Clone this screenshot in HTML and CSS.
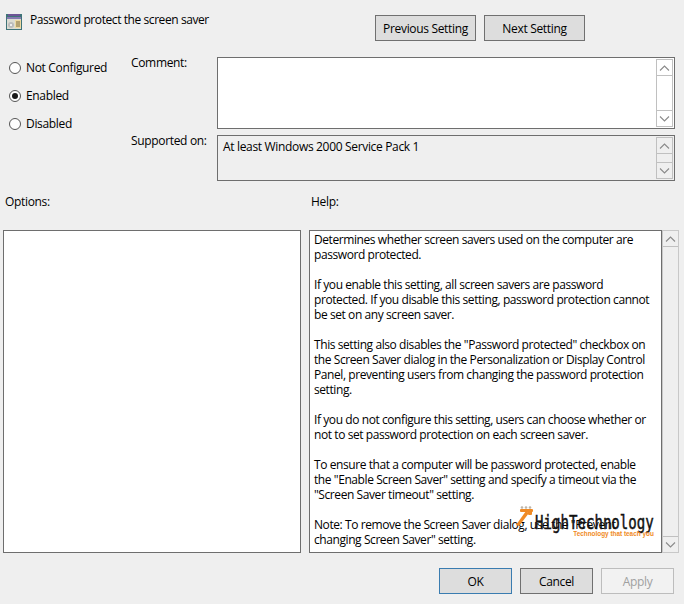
FILE: index.html
```html
<!DOCTYPE html>
<html lang="en">
<head>
<meta charset="utf-8">
<title>Password protect the screen saver</title>
<link rel="stylesheet" href="styles.css">
</head>
<body>
<div class="dialog">
  <header class="head">
    <div class="title">
      <svg class="title-icon" width="16" height="16" viewBox="0 0 16 16">
        <rect x="0" y="0" width="16" height="16" fill="#3f7378"/>
        <rect x="2" y="0" width="12" height="2" fill="#6d5596"/>
        <rect x="1" y="3" width="14" height="2" fill="#8578b0"/>
        <rect x="1" y="5" width="14" height="10" fill="#dcdcd2"/>
        <circle cx="5" cy="11" r="3" fill="#bcbcbc"/>
        <circle cx="5" cy="11" r="1" fill="#fff"/>
        <rect x="9" y="6" width="6" height="8" fill="#eed9a0"/>
        <path d="M10 8h4M10 10h4M10 12h4" stroke="#7a6a44" stroke-width="1"/>
      </svg>
      <span>Password protect the screen saver</span>
    </div>
    <div class="nav">
      <button class="btn nav-btn" type="button">Previous Setting</button>
      <button class="btn nav-btn" type="button">Next Setting</button>
    </div>
  </header>

  <section class="settings">
    <div class="radios">
      <label class="radio"><span class="dot"></span>Not Configured</label>
      <label class="radio"><span class="dot on"></span>Enabled</label>
      <label class="radio"><span class="dot"></span>Disabled</label>
    </div>
    <div class="fields">
      <div class="field field-comment">
        <span class="field-label">Comment:</span>
        <div class="box box-white box-wide">
          <div class="box-text"></div>
          <div class="scroll">
            <span class="arrow"><svg width="11" height="6" viewBox="0 0 11 6"><path d="M1 5.5 5.5 1 10 5.500" class="chev"/></svg></span>
            <span class="track"></span>
            <span class="arrow arrow-end"><svg width="11" height="6" viewBox="0 0 11 6"><path d="M1 .5 5.500 5 10 .5" class="chev"/></svg></span>
          </div>
        </div>
      </div>
      <div class="field field-support">
        <span class="field-label">Supported on:</span>
        <div class="box box-wide box-support">
          <div class="box-text">At least Windows 2000 Service Pack 1</div>
          <div class="scroll">
            <span class="arrow"><svg width="11" height="6" viewBox="0 0 11 6"><path d="M1 5.5 5.5 1 10 5.500" class="chev"/></svg></span>
            <span class="track"></span>
            <span class="arrow arrow-end"><svg width="11" height="6" viewBox="0 0 11 6"><path d="M1 .5 5.500 5 10 .5" class="chev"/></svg></span>
          </div>
        </div>
      </div>
    </div>
  </section>

  <section class="panes">
    <div class="pane pane-options">
      <div class="pane-label">Options:</div>
      <div class="box box-white box-tall"></div>
    </div>
    <div class="pane pane-help">
      <div class="pane-label">Help:</div>
      <div class="help-wrap">
        <div class="box box-white box-tall help-text">
          <p>Determines whether screen savers used on the computer are password protected.</p>
          <p>If you enable this setting, all screen savers are password protected. If you disable this setting, password protection cannot be set on any screen saver.</p>
          <p>This setting also disables the "Password protected" checkbox on the Screen Saver dialog in the Personalization or Display Control Panel, preventing users from changing the password protection setting.</p>
          <p>If you do not configure this setting, users can choose whether or not to set password protection on each screen saver.</p>
          <p>To ensure that a computer will be password protected, enable the "Enable Screen Saver" setting and specify a timeout via the "Screen Saver timeout" setting.</p>
          <p>Note: To remove the Screen Saver dialog, use the "Prevent changing Screen Saver" setting.</p>
        </div>
        <div class="scroll scroll-help">
          <span class="arrow"><svg width="11" height="6" viewBox="0 0 11 6"><path d="M1 5.5 5.5 1 10 5.500" class="chev"/></svg></span>
          <span class="track"></span>
          <span class="arrow arrow-end"><svg width="11" height="6" viewBox="0 0 11 6"><path d="M1 .5 5.500 5 10 .5" class="chev"/></svg></span>
        </div>
        <div class="watermark">
          <svg class="wm-logo" width="18" height="21" viewBox="0 0 18 21">
            <g fill="#bdb5aa"><circle cx="6" cy="1.500" r="1.300"/><circle cx="10" cy="1.500" r="1.300"/><circle cx="14" cy="1.500" r="1.300"/></g>
            <g fill="#f08a24"><rect x="4" y="3" width="13" height="3" rx="1"/><rect x="12" y="5" width="4" height="4" rx="1"/><path d="M10 5l3 2-10 13-3-1z"/></g>
          </svg>
          <div class="wm-copy">
            <div class="wm-name">HighTechnology</div>
            <div class="wm-tag">Technology that teach you</div>
          </div>
        </div>
      </div>
    </div>
  </section>

  <footer class="actions">
    <button class="btn btn-default" type="button">OK</button>
    <button class="btn" type="button">Cancel</button>
    <button class="btn btn-disabled" type="button" disabled>Apply</button>
  </footer>
</div>
</body>
</html>
```
FILE: styles.css
```css
* { box-sizing: border-box; }
html, body { margin: 0; padding: 0; }
body {
  width: 684px;
  height: 604px;
  overflow: hidden;
  background: #efefef;
  color: #000;
  font-family: "Open Sans", "Noto Sans", sans-serif;
  font-size: 12px;
  line-height: 15px;
  letter-spacing: -0.33px;
}
.dialog { display: flex; flex-direction: column; height: 604px; }

.head { display: flex; flex: none; justify-content: space-between; height: 57px; padding: 14px 99px 0 6px; }
.title { display: flex; align-items: flex-start; gap: 8px; letter-spacing: -0.42px; }
.title span { margin-top: -2px; }
.nav { display: flex; gap: 8px; padding-top: 1px; }

.btn {
  width: 73px;
  height: 26px;
  padding: 0;
  border: 1px solid #707070;
  border-radius: 0;
  background: #dddddd;
  color: #000;
  font: inherit;
  letter-spacing: inherit;
}
.nav-btn { width: 101px; }
.btn-default { border-color: #3a7cb0; }
.btn-disabled { background: #f2f2f2; border-color: #bdbdbd; color: #a0a0a0; }

.settings { display: flex; flex: none; height: 124px; }
.radios { width: 131px; padding: 3px 0 0 9px; display: flex; flex-direction: column; gap: 13px; }
.radio { display: flex; align-items: center; gap: 5px; height: 15px; }
.dot {
  width: 12px;
  height: 12px;
  border: 1px solid #555;
  border-radius: 50%;
  background: #fff;
  flex: none;
  display: flex;
  align-items: center;
  justify-content: center;
}
.dot.on::after { content: ""; width: 6px; height: 6px; border-radius: 50%; background: #1a1a1a; }

.fields { display: flex; flex-direction: column; gap: 6px; }
.field { display: flex; }
.field-label { width: 86px; margin-top: -2px; }
.box { border: 1px solid #6e6e6e; }
.box-white { background: #fff; }
.box-wide { width: 458px; display: flex; justify-content: space-between; padding: 1px; }
.field-comment .box { height: 72px; }
.box-support { height: 46px; }
.box-text { padding: 2px 4px; }

.scroll { width: 17px; display: flex; flex-direction: column; background: #fff; border: 1px solid #c0c0c0; }
.box-support .scroll { background: #efefef; }
.arrow { height: 16px; flex: none; display: flex; align-items: center; justify-content: center; border-bottom: 1px solid #c0c0c0; }
.arrow-end { border-bottom: 0; border-top: 1px solid #c0c0c0; }
.track { flex: 1; }
.chev { fill: none; stroke: #8a8a8a; stroke-width: 1.100; }

.panes { display: flex; flex: none; padding-top: 13px; height: 387px; }
.pane-label { height: 36px; }
.pane-options { width: 306px; padding-left: 3px; }
.pane-options .pane-label { padding-left: 2px; }
.pane-help { padding-left: 3px; }
.pane-help .pane-label { padding-left: 2px; }
.box-tall { height: 323px; }
.pane-options .box-tall { width: 298px; }
.help-wrap { position: relative; display: flex; }
.help-text { width: 353px; padding: 1px 8px 0 4px; overflow: hidden; letter-spacing: -0.42px; }
.help-text p { margin: 0 0 15px; }
.scroll-help { height: 323px; background: #efefef; border-color: #c8c8c8; }

.watermark { position: absolute; left: 207px; top: 276px; display: flex; align-items: flex-start; pointer-events: none; }
.wm-copy { margin: 5px 0 0 1px; text-align: right; }
.wm-name { font-family: "DejaVu Sans Mono", monospace; font-size: 14.100px; line-height: 16px; letter-spacing: 0; color: #111; -webkit-text-stroke: 0.35px #111; transform: scaleY(1.35); transform-origin: top; }
.wm-tag { margin-top: 3px; font-family: "Liberation Sans", sans-serif; font-weight: 700; font-size: 8px; line-height: 8px; letter-spacing: 0; color: #f08a24; white-space: nowrap; transform: scaleX(0.8); transform-origin: right; }

.actions { display: flex; flex: none; justify-content: flex-end; gap: 8px; padding: 0 10px 0 0; }
```
